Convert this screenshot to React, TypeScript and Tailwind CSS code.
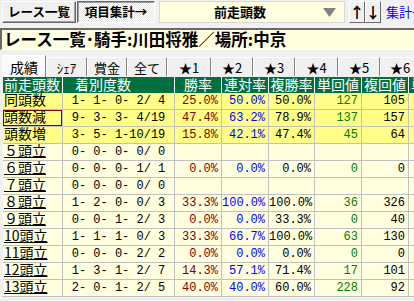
import React from 'react';

type Row = {
  label: string;
  rec: string;
  win?: string;
  ren?: string;
  fuku?: string;
  tan?: string;
  fk?: string;
  hi?: boolean;
  sel?: boolean;
};

const rows: Row[] = [
  { label: '同頭数', rec: '1- 1- 0- 2/ 4', win: '25.0%', ren: '50.0%', fuku: '50.0%', tan: '127', fk: '105', hi: true },
  { label: '頭数減', rec: '9- 3- 3- 4/19', win: '47.4%', ren: '63.2%', fuku: '78.9%', tan: '137', fk: '157', hi: true, sel: true },
  { label: '頭数増', rec: '3- 5- 1-10/19', win: '15.8%', ren: '42.1%', fuku: '47.4%', tan: '45', fk: '64', hi: true },
  { label: '５頭立', rec: '0- 0- 0- 0/ 0' },
  { label: '６頭立', rec: '0- 0- 0- 1/ 1', win: '0.0%', ren: '0.0%', fuku: '0.0%', tan: '0', fk: '0' },
  { label: '７頭立', rec: '0- 0- 0- 0/ 0' },
  { label: '８頭立', rec: '1- 2- 0- 0/ 3', win: '33.3%', ren: '100.0%', fuku: '100.0%', tan: '36', fk: '326' },
  { label: '９頭立', rec: '0- 0- 1- 2/ 3', win: '0.0%', ren: '0.0%', fuku: '33.3%', tan: '0', fk: '40' },
  { label: '10頭立', rec: '1- 1- 1- 0/ 3', win: '33.3%', ren: '66.7%', fuku: '100.0%', tan: '63', fk: '130' },
  { label: '11頭立', rec: '0- 0- 0- 2/ 2', win: '0.0%', ren: '0.0%', fuku: '0.0%', tan: '0', fk: '0' },
  { label: '12頭立', rec: '1- 3- 1- 2/ 7', win: '14.3%', ren: '57.1%', fuku: '71.4%', tan: '17', fk: '101' },
  { label: '13頭立', rec: '2- 0- 1- 2/ 5', win: '40.0%', ren: '40.0%', fuku: '60.0%', tan: '228', fk: '92' },
];

const tabs = ['ｼｪｱ', '賞金', '全て', '★1', '★2', '★3', '★4', '★5', '★6'];
const tabWidths = ['w-[41px]', 'w-[40px]', 'w-[40px]', 'w-[44px]', 'w-[42px]', 'w-[42px]', 'w-[43px]', 'w-[42px]', 'w-[40px]'];

const jp = "font-['Noto_Sans_CJK_JP',sans-serif]";
const mono = "font-['Liberation_Mono','Noto_Sans_CJK_JP',monospace]";
const cols = 'grid grid-cols-[60px_112px_47px_47px_46px_47px_47px_40px]';

function App() {
  return (
    <div className={`w-[414px] h-[301px] overflow-hidden bg-[#f0f0f0] ${jp}`}>
      {/* top bar */}
      <div className="h-[28px] flex items-start pt-[1px] pl-[2px]">
        <div className="h-[22px] w-[74px] shrink-0 flex items-center justify-center bg-[#f0f0f0] border border-t-white border-l-white border-r-[#696969] border-b-[#696969] shadow-[inset_-1px_-1px_0_#a0a0a0] text-[12.5px] font-bold leading-[20px] text-black whitespace-nowrap">
          レース一覧
        </div>
        <div className="ml-[1px] h-[22px] w-[78px] shrink-0 flex items-center justify-center border border-t-[#696969] border-l-[#696969] border-r-white border-b-white shadow-[inset_1px_1px_0_#a0a0a0] bg-[image:repeating-conic-gradient(#ffffff_0_25%,#e4e4e4_0_50%)] bg-[length:2px_2px] text-[12.5px] font-bold leading-[20px] text-black whitespace-nowrap">
          項目集計→
        </div>
        <div className="ml-[4px] h-[22px] w-[186px] shrink-0 relative flex items-center justify-center bg-[#ffffe0] border border-[#d8d8d8]">
          <span className="text-[13px] font-bold leading-[20px] text-black pr-[24px]">前走頭数</span>
          <svg className="absolute right-[8px] top-[6px]" width="13" height="9" viewBox="0 0 13 9">
            <polygon points="0,0 13,0 6.5,9" fill="#808080" />
          </svg>
        </div>
        <div className="ml-[4px] h-[22px] w-[16px] shrink-0 flex items-center justify-center bg-[#f0f0f0] border border-t-white border-l-white border-r-[#696969] border-b-[#696969] text-[15px] font-bold leading-[20px]">
          ↑
        </div>
        <div className="h-[22px] w-[16px] shrink-0 flex items-center justify-center bg-[#f0f0f0] border border-t-white border-l-white border-r-[#696969] border-b-[#696969] text-[15px] font-bold leading-[20px]">
          ↓
        </div>
        <div className="ml-[5px] h-[22px] flex items-center whitespace-nowrap text-[13px] leading-[20px] text-[#0000ff]">
          集計一覧
        </div>
      </div>

      {/* title */}
      <div className="h-[22px] flex items-center bg-[#ffffe0] border-t-2 border-l-2 border-t-[#696969] border-l-[#696969] border-b border-b-white pl-[2px] whitespace-nowrap text-[16.5px] font-bold leading-[19px] text-black">
        レース一覧･騎手:川田将雅／場所:中京
      </div>

      {/* tabs */}
      <div className="h-[27px] flex items-end pl-[2px]">
        <div className="h-[22px] w-[44px] shrink-0 flex items-center justify-center bg-[#fbfbfb] border border-b-0 border-t-white border-l-white border-r-[#808080] text-[14px] leading-[20px] text-black">
          成績
        </div>
        {tabs.map((t, i) => (
          <div
            key={t}
            className={`h-[19px] mb-[1px] ${tabWidths[i]} shrink-0 flex items-center justify-center bg-[#f0f0f0] border border-t-white border-l-white border-r-[#808080] border-b-0 text-[13px] leading-[17px] text-black`}
          >
            {t}
          </div>
        ))}
      </div>

      {/* table */}
      <div className="ml-[3px] w-[411px] overflow-hidden">
        <div className={`${cols} w-[452px] h-[16px] bg-[#007040] text-white text-[14px] leading-[14px]`}>
          <div className="pl-[1px] border-r border-white whitespace-nowrap overflow-hidden">前走頭数</div>
          <div className="pl-[12px] border-r border-white whitespace-nowrap">着別度数</div>
          <div className="text-center border-r border-white whitespace-nowrap">勝率</div>
          <div className="text-center border-r border-white whitespace-nowrap">連対率</div>
          <div className="text-center border-r border-white whitespace-nowrap">複勝率</div>
          <div className="text-center border-r border-white whitespace-nowrap">単回値</div>
          <div className="text-center border-r border-white whitespace-nowrap">複回値</div>
          <div className="pl-[2px] whitespace-nowrap">単回</div>
        </div>
        {rows.map((r) => {
          const bg = r.hi ? 'bg-[#ffff88]' : 'bg-[#ffffe0]';
          const cell = `h-[17px] border-r border-b border-[#c0c0c0] ${bg} whitespace-nowrap overflow-hidden`;
          const num = `${cell} text-right pr-[3px] ${mono} text-[12px] leading-[16px] whitespace-pre`;
          return (
            <div key={r.label} className={`${cols} w-[452px]`}>
              <div className={`${cell} pl-[1px] text-[14px] leading-[12px] text-black ${r.sel ? 'shadow-[inset_0_0_0_1px_#800000]' : ''}`}>
                <span className={r.hi ? '' : 'underline underline-offset-[1px]'}>{r.label}</span>
              </div>
              <div className={`${cell} text-center ${mono} text-[12px] leading-[16px] whitespace-pre text-black`}>{r.rec}</div>
              <div className={`${num} text-[#800000]`}>{r.win ?? ''}</div>
              <div className={`${num} text-[#0000ff]`}>{r.ren ?? ''}</div>
              <div className={`${num} text-black`}>{r.fuku ?? ''}</div>
              <div className={`${num} text-[#008000]`}>{r.tan ?? ''}</div>
              <div className={`${num} text-black`}>{r.fk ?? ''}</div>
              <div className={`${cell} border-r-0`}></div>
            </div>
          );
        })}
      </div>
    </div>
  );
}

export default App;
